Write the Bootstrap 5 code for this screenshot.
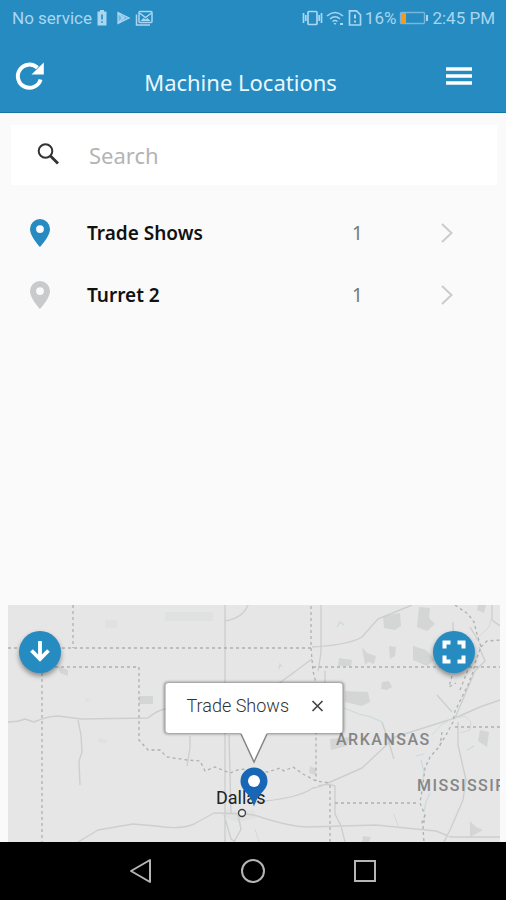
<!DOCTYPE html>
<html lang="en">
<head>
<meta charset="utf-8">
<meta name="viewport" content="width=device-width, initial-scale=1">
<title>Machine Locations</title>
<link href="https://cdn.jsdelivr.net/npm/bootstrap@5.3.0/dist/css/bootstrap.min.css" rel="stylesheet">
<style>
  :root { --brand: #258bc0; }
  body { background: #fafafa; font-family: "Noto Sans", "Open Sans", sans-serif; }
  svg { display: block; flex: none; }
  .app-header { background: var(--brand); border-bottom: 1px solid #1377a8; color: #fff; }
  .status-bar { height: 36px; padding: 0 11px 0 12px; font: 17px/20px Roboto, sans-serif; color: #a9d6f1; }
  .status-group { gap: 3px; }
  .title-bar { height: 76px; padding: 4px 33px 0 14px; }
  .title-bar h1 { font-size: 22px; line-height: 28px; padding: 12px 10px 0 0; color: #e9f7ff; }
  .plain-btn { background: none; border: 0; padding: 0; color: inherit; }
  .search-box { height: 60px; margin: 12px 9px 0 11px; padding-left: 24px; background: #fff; }
  .search-box input { font-size: 22px; line-height: 28px; padding: 0; margin-left: 26px; color: #444; }
  .search-box input::placeholder { color: #b4b4b4; opacity: 1; }
  .place-list { padding-top: 17px; }
  .place-row { height: 62px; padding: 0 52px 0 29px; color: #111; font-size: 19px; line-height: 24px; }
  .place-name { font-weight: 600; margin-left: 36px; }
  .place-count { width: 88px; color: #777; }
  .map-panel { height: 237px; margin: 0 6px 0 8px; background: #e6e6e6; }
  .map-art { width: 100%; height: 100%; }
  .map-btn { position: absolute; top: 26px; width: 42px; height: 42px; background: var(--brand); color: #fff; box-shadow: 0 3px 5px rgba(0,0,0,.4); }
  .map-btn-down { left: 11px; }
  .map-btn-full { right: 25px; }
  .map-popup { position: absolute; top: 78px; left: 50%; width: 177px; height: 50px; transform: translateX(-50%); padding: 0 19px 4px 21px; background: #fff; border-radius: 3px; box-shadow: 0 0 3px 1px rgba(0,0,0,.4); font: 300 18px/24px Roboto, sans-serif; color: #333; }
  .popup-tail { position: absolute; top: 126px; left: 50%; transform: translateX(-50%); }
  .map-pin { position: absolute; top: 162px; left: 50%; transform: translateX(-50%); }
  .system-nav { height: 58px; background: #000; gap: 86px; }
</style>
<script src="https://cdn.jsdelivr.net/npm/bootstrap@5.3.0/dist/js/bootstrap.bundle.min.js"></script>
</head>
<body>
<div class="d-flex flex-column min-vh-100">
  <header class="app-header">
    <div class="status-bar d-flex align-items-center justify-content-between">
      <div class="d-flex align-items-center">
        <span>No service</span>
        <svg class="ms-1" width="12" height="18" viewBox="0 0 12 18" aria-hidden="true"><path fill="currentColor" fill-rule="evenodd" d="M4 1h4v1.500h2.500v14h-9v-14H4zM5.200 5.500v5h1.600v-5zM5.200 12.200v1.600h1.600v-1.600z"/></svg>
        <svg class="ms-2" width="15" height="18" viewBox="0 0 15 18" aria-hidden="true"><path d="M2 3.500v11L13 9zM2 3.500l6 7M2 14.500l6-7" fill="currentColor" fill-opacity=".6" stroke="currentColor" stroke-width="1.300"/></svg>
        <svg class="ms-1" width="18" height="18" viewBox="0 0 18 18" aria-hidden="true"><g fill="none" stroke="currentColor" stroke-width="1.500"><rect x="4" y="2.500" width="13" height="11" rx="1"/><path d="M1.500 5.500v10.500H15M4.500 4l6 4.500 6-4.500"/></g><path fill="currentColor" d="m5.500 12 3-3 2 1.500 2-1.500 3 3z"/></svg>
      </div>
      <div class="status-group d-flex align-items-center">
        <svg width="21" height="18" viewBox="0 0 21 18" aria-hidden="true"><g fill="none" stroke="currentColor" stroke-width="1.700"><rect x="6" y="2.500" width="9" height="13" rx="1"/><path d="M1.500 4v10M3.800 6v6M17.200 6v6M19.500 4v10"/></g></svg>
        <svg width="19" height="18" viewBox="0 0 19 18" aria-hidden="true"><g fill="none" stroke="currentColor" stroke-width="1.600"><path d="M1 7q8-7 16 0M4 10q5-4.500 10 0M6.500 12.500q2.500-2 5 0"/></g><path fill="currentColor" d="M7.500 14h3L9 16zM14 14h3v2h-3z"/></svg>
        <svg width="14" height="18" viewBox="0 0 14 18" aria-hidden="true"><path d="M1.500 1.800h7l4 4V16h-11z" fill="none" stroke="currentColor" stroke-width="1.700"/><path d="M7 5.500v4M7 11.500v2" stroke="currentColor" stroke-width="2"/></svg>
        <span>16%</span>
        <svg width="30" height="16" viewBox="0 0 30 16" aria-hidden="true"><rect x="1.500" y="2.500" width="24" height="11" rx="1" fill="none" stroke="#79b5dc" stroke-width="1.400"/><path d="M28 5v6" stroke="currentColor" stroke-width="2"/><path fill="#f39a1f" d="M2 3h5v10H2z"/></svg>
        <span>2:45 PM</span>
      </div>
    </div>
    <div class="title-bar d-flex align-items-center justify-content-between">
      <button type="button" class="plain-btn" aria-label="Refresh">
        <svg width="32" height="32" viewBox="0 0 32 32"><path d="M26.600 19.500A11.600 11.600 0 1 1 23.500 7.800" fill="none" stroke="#fff" stroke-width="4"/><path d="M29.800 2.500v12H17.500z" fill="#fff"/></svg>
      </button>
      <h1 class="m-0 fw-normal">Machine Locations</h1>
      <button type="button" class="plain-btn" aria-label="Menu">
        <svg width="28" height="20" viewBox="0 0 28 20"><path d="M1 3h26M1 10h26M1 17h26" stroke="#fff" stroke-width="3.400"/></svg>
      </button>
    </div>
  </header>

  <main class="flex-grow-1 d-flex flex-column">
    <div class="search-box d-flex align-items-center">
      <label for="q" aria-label="Search"><svg width="28" height="28" viewBox="0 0 28 28"><circle cx="10.500" cy="10" r="6.800" fill="none" stroke="#333" stroke-width="2"/><path d="m15.500 15 7.500 7.500" stroke="#333" stroke-width="2.800"/></svg></label>
      <input id="q" type="text" class="form-control border-0 shadow-none bg-transparent rounded-0" placeholder="Search">
    </div>
    <div class="place-list flex-grow-1">
      <a href="#trade-shows" class="place-row d-flex align-items-center text-decoration-none">
        <svg width="22" height="28" viewBox="0 0 22 28" aria-hidden="true"><path fill="#258bc0" fill-rule="evenodd" d="M11 0A10 10 0 0 0 1 10c0 7.500 10 18 10 18s10-10.500 10-18A10 10 0 0 0 11 0zm0 6.200a3.900 3.900 0 1 1 0 7.800 3.900 3.900 0 0 1 0-7.800z"/></svg>
        <span class="place-name flex-grow-1">Trade Shows</span>
        <span class="place-count">1</span>
        <svg width="14" height="20" viewBox="0 0 14 20" aria-hidden="true"><path d="m2 1 9.500 9L2 19" fill="none" stroke="#ccc" stroke-width="2"/></svg>
      </a>
      <a href="#turret-2" class="place-row d-flex align-items-center text-decoration-none">
        <svg width="22" height="28" viewBox="0 0 22 28" aria-hidden="true"><path fill="#c9cacc" fill-rule="evenodd" d="M11 0A10 10 0 0 0 1 10c0 7.500 10 18 10 18s10-10.500 10-18A10 10 0 0 0 11 0zm0 6.200a3.900 3.900 0 1 1 0 7.800 3.900 3.900 0 0 1 0-7.800z"/></svg>
        <span class="place-name flex-grow-1">Turret 2</span>
        <span class="place-count">1</span>
        <svg width="14" height="20" viewBox="0 0 14 20" aria-hidden="true"><path d="m2 1 9.500 9L2 19" fill="none" stroke="#ccc" stroke-width="2"/></svg>
      </a>
    </div>

    <section class="map-panel position-relative overflow-hidden" aria-label="Map">
      <svg class="map-art" viewBox="8 605 492 237" preserveAspectRatio="xMidYMid slice">
        <!-- parks and built-up areas -->
        <g fill="#d4d5d5">
          <path d="M139 696h14v8h-14zM58 666l10 4v6l-8-3zM383 616l17-3 1 13-6 4-11-2zM419 607l11 1-1 10 6 6-8 7-10-4zM362 647l5 6 9 3-2 8-6-2-3 3zM389 646l7 1-1 9-5 3zM413 646l13 4 9 10-8 6-14-6zM339 658l13 2-1 6h-13zM345 691l23 1 2 10-8 4-17-4zM382 682l7-1 3 6-5 3-6-1zM478 605l8 0-2 8-7-3zM480 730l9 2-2 15-9-6zM330 739l20-2-3 9-16 4zM310 766l7 3-2 6-6-2zM470 821l6 6 7 3-13 7zM363 836l8 1-2 5h-7z"/>
        </g>
        <g fill="#e0e1e1"><path d="M105 620h12v8h-12zM165 612h48v9h-48zM98 738l10 2-3 4-7-2zM84 698l8 1-5 3zM226 809l12 3 16-2 2 8-18 4-12-4z"/></g>
        <!-- rivers and lakes -->
        <g fill="none" stroke="#cadadd" stroke-width="1.200">
          <path d="m337 627 3-5 4 3M279 669l1-5 2 3M344 708l15 6 12 3 11 5M424 812l2-10 4-9M416 756l8-2M421 760l3 12-2 12M467 750l7-4"/>
        </g>
        <!-- highways -->
        <g fill="none" stroke="#cdcfcf" stroke-width="1.400" stroke-linejoin="round">
          <path d="M225 605v250M225 621q18-3 23-16M8 722q10 0 17-3l9 3q14-6 24-6l23 3 67-1q8-7 17-9h85l20-19 42-31M321 605v48l-3 18M312 647q37-2 50-10l16-18 34-14M78 720l3 15 1 17-3 9 1 24M78 842l20-12 35-6 23 2q25 4 38-2l20-11 31 1 9 1q36 12 54 12l68-2 60 6 15 6h79M190 736v12l-3 18M229 735l2 79M238 815l3 14-7 13M224 815l7 24 4 3M254 802q43-3 59-14 8-1 15-5l34-15 33-31 60-19 25-11 20-7M318 786q10-3 17 0v28l6 12 4 16M382 722l8 24 4 13M458 722l0 23 8 35-3 20-13 30-6 12M437 695l15 17M479 647l6 14-10 10-20 47M325 671v22M453 622v30M492 605v15l8 6M479 642l-9-15"/>
        </g>
        <g fill="none" stroke="#d7d9d9" stroke-width="1"><path d="M475 640l14-13 3-12M455 718l10-2 6 6-1 8-10 3M255 829l4 13M398 826l-4-12M432 735l9-10 12-7"/></g>
        <!-- state borders -->
        <g fill="none" stroke="#afb1b1" stroke-width="1.300" stroke-dasharray="3 3">
          <path d="M73 605v43M8 648h303V605M55 667h84v73l9 10h12l7 7 20 3 13 1 5 10 10-4 15 6 10-4 28 3 12-4 4 3 9-4 10 7 13 7 15 2M42 667v175M311 648l2 23 3 12v98M313 667h187M330 785v57M335 803h84M455 605l13 9 6 8 3 12 4 13-5 13-3 12-5 13-6 12-7 14-2 11-7 13-8 13-8 9-5 11-2 17-3 18 5 12-2 13 1 14M455 727h45M452 676l-3 11 7-4M481 647l6-6 13-1M460 690l13-33M442 732l-2 14M425 815l-4 10"/>
        </g>
        <g font-family="Roboto, sans-serif">
          <g fill="#858686" font-size="16" font-weight="500" letter-spacing="1.500">
            <text x="336" y="745">ARKANSAS</text>
            <text x="417" y="791">MISSISSIPPI</text>
          </g>
          <text x="216" y="804" fill="#222" font-size="18">Dallas</text>
          <circle cx="242" cy="813" r="3.500" fill="#eee" stroke="#444" stroke-width="1.400"/>
        </g>
      </svg>

      <button type="button" class="map-btn map-btn-down plain-btn rounded-circle d-flex align-items-center justify-content-center" aria-label="Collapse map">
        <svg width="24" height="24" viewBox="0 0 24 24"><path d="M12 1v18M3.500 10.500l8.500 8.500 8.500-8.500" fill="none" stroke="#fff" stroke-width="3.800"/></svg>
      </button>
      <button type="button" class="map-btn map-btn-full plain-btn rounded-circle d-flex align-items-center justify-content-center" aria-label="Full screen">
        <svg width="24" height="24" viewBox="0 0 24 24"><path d="M2.500 8.500v-6h6M15.500 2.500h6v6M21.500 15.500v6h-6M8.500 21.500h-6v-6" fill="none" stroke="#fff" stroke-width="4"/></svg>
      </button>

      <div class="map-popup d-flex align-items-center justify-content-between">
        <span class="text-nowrap">Trade Shows</span>
        <button type="button" class="plain-btn" aria-label="Close"><svg width="12" height="12" viewBox="0 0 12 12"><path d="m1 1 10 10M11 1 1 11" stroke="#444" stroke-width="1.700"/></svg></button>
      </div>
      <svg class="popup-tail" width="32" height="34" viewBox="0 0 32 34" aria-hidden="true"><path d="M2 0 16 31 30 0z" fill="#fff"/><path d="m3 3 13 28L29 3" fill="none" stroke="#858585" stroke-width="1.500"/></svg>
      <svg class="map-pin" width="28" height="40" viewBox="0 0 28 40" aria-hidden="true"><path d="M14 .500A13.500 13.500 0 0 0 .500 14c0 5 2.500 8.500 6 12 3.500 4 6 8 7.500 13.500 1.500-5.500 4-9.500 7.500-13.500 3.500-3.500 6-7 6-12A13.500 13.500 0 0 0 14 .500z" fill="#1767b6"/><circle cx="14" cy="14" r="6" fill="#fff"/></svg>
    </section>
  </main>

  <nav class="system-nav d-flex align-items-center justify-content-center" aria-label="System">
    <button type="button" class="plain-btn" aria-label="Back"><svg width="26" height="28" viewBox="0 0 26 28"><path d="M22 3v22L3 14z" fill="none" stroke="#b5b5b5" stroke-width="2" stroke-linejoin="round"/></svg></button>
    <button type="button" class="plain-btn" aria-label="Home"><svg width="26" height="28" viewBox="0 0 26 28"><circle cx="13" cy="14" r="11" fill="none" stroke="#b5b5b5" stroke-width="2"/></svg></button>
    <button type="button" class="plain-btn" aria-label="Recent apps"><svg width="26" height="28" viewBox="0 0 26 28"><rect x="3" y="4" width="20" height="20" fill="none" stroke="#b5b5b5" stroke-width="2"/></svg></button>
  </nav>
</div>
</body>
</html>
